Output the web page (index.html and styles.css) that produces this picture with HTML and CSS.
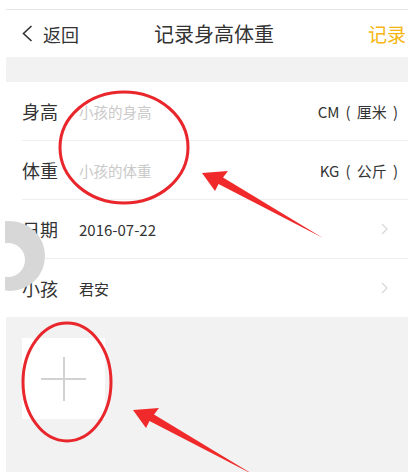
FILE: index.html
```html
<!DOCTYPE html>
<html lang="zh">
<head>
<meta charset="utf-8">
<link rel="stylesheet" href="styles.css">
</head>
<body>
<div class="page">
  <div class="app">
    <div class="topline"></div>
    <header class="header">
      <div class="back">
        <svg class="back-icon" width="11" height="17" viewBox="0 0 11 17"><polyline points="9.5,1 1.5,8.5 9.5,16" fill="none" stroke="#333" stroke-width="1.6"/></svg>
        <span>返回</span>
      </div>
      <div class="title">记录身高体重</div>
      <div class="action">记录</div>
    </header>
    <div class="band"></div>
    <div class="rows">
      <div class="row">
        <span class="label">身高</span>
        <span class="placeholder">小孩的身高</span>
        <span class="unit">CM ( 厘米 )</span>
      </div>
      <div class="row">
        <span class="label">体重</span>
        <span class="placeholder">小孩的体重</span>
        <span class="unit">KG ( 公斤 )</span>
      </div>
      <div class="row">
        <span class="label">日期</span>
        <span class="value">2016-07-22</span>
        <svg class="chev" width="7" height="12" viewBox="0 0 7 12"><polyline points="1,1 6,6 1,11" fill="none" stroke="#d9d9d9" stroke-width="1.3"/></svg>
      </div>
      <div class="row last">
        <span class="label">小孩</span>
        <span class="value">君安</span>
        <svg class="chev" width="7" height="12" viewBox="0 0 7 12"><polyline points="1,1 6,6 1,11" fill="none" stroke="#d9d9d9" stroke-width="1.3"/></svg>
      </div>
    </div>
    <div class="photos">
      <div class="add"></div>
    </div>
  </div>
  <svg class="overlay" width="408" height="472" viewBox="0 0 408 472">
    <circle cx="10" cy="256" r="35" fill="#d7d7d7"/>
    <circle cx="8" cy="260" r="17" fill="#ffffff"/>
    <rect x="0" y="215" width="5" height="80" fill="#ffffff"/>
    <ellipse cx="124" cy="147.5" rx="64" ry="55.5" fill="none" stroke="#e8262b" stroke-width="3"/>
    <ellipse cx="67" cy="382" rx="44" ry="59" fill="none" stroke="#e8262b" stroke-width="3"/>
    <polygon points="202,173 228,171 223,177.5 323,238 218.5,184 215,191" fill="#f02a2a"/>
    <polygon points="133,410 159,408 154,414.5 254,475 149.5,421 146,428" fill="#f02a2a"/>
  </svg>
</div>
</body>
</html>
```
FILE: styles.css
```css
* { box-sizing: border-box; }
html, body { margin: 0; padding: 0; background: #ffffff; }
body {
  font-family: "Noto Sans CJK SC", "Noto Sans", Roboto, sans-serif;
  color: #333333;
}
.page {
  position: relative;
  width: 408px;
  height: 472px;
  overflow: hidden;
}
.app {
  margin-left: 6px;
  width: 417px;
}
.topline {
  height: 10px;
  border-bottom: 1px solid #e6e6e6;
}
.header {
  height: 47px;
  display: grid;
  grid-template-columns: 1fr auto 1fr;
  align-items: center;
  padding: 0 17px 0 16px;
}
.back {
  display: flex;
  align-items: center;
  font-size: 18px;
  color: #333;
}
.back-icon { margin-right: 10px; }
.title {
  font-size: 20px;
  color: #333;
}
.action {
  justify-self: end;
  font-size: 19px;
  color: #f6b60f;
}
.band {
  height: 25px;
  background: #f2f2f2;
}
.rows { background: #fff; }
.row {
  display: flex;
  align-items: center;
  height: 59px;
  margin-left: 16px;
  padding-right: 25px;
  border-bottom: 1px solid #eeeeee;
}
.row.last {
  border-bottom: none;
  height: 58px;
}
.label {
  font-size: 18px;
  width: 57px;
  color: #333;
}
.placeholder {
  font-size: 14.5px;
  color: #c9c9c9;
  flex: 1;
}
.value {
  font-size: 15px;
  color: #333;
  flex: 1;
}
.unit {
  font-size: 15px;
  color: #333;
  word-spacing: 2.8px;
}
.chev { margin-right: 10px; }
.photos {
  background: #f2f2f2;
  height: 160px;
  padding: 21px 16px;
}
.add {
  position: relative;
  width: 83px;
  height: 81px;
  background: #fff;
}
.add::before, .add::after {
  content: "";
  position: absolute;
  background: #d2d2d2;
}
.add::before {
  left: 19px;
  top: 40px;
  width: 45px;
  height: 1.5px;
}
.add::after {
  left: 41px;
  top: 19px;
  width: 1.5px;
  height: 44px;
}
.overlay {
  position: absolute;
  left: 0;
  top: 0;
  pointer-events: none;
}
```
